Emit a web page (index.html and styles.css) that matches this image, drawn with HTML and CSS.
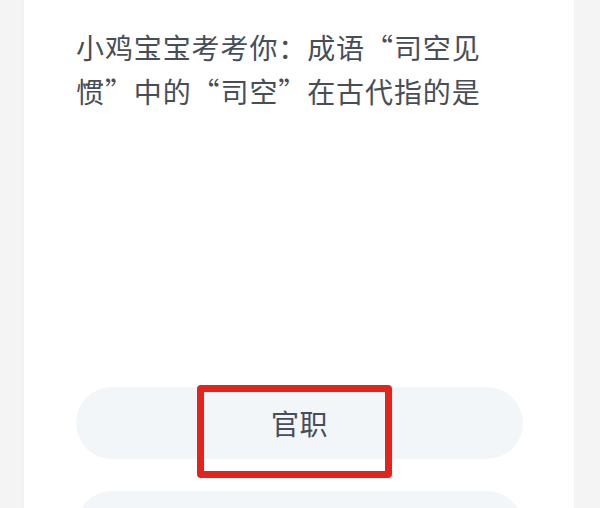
FILE: index.html
```html
<!DOCTYPE html>
<html lang="zh-CN">
<head>
<meta charset="utf-8">
<title>小鸡宝宝考考你</title>
<link rel="stylesheet" href="styles.css">
</head>
<body>
<div class="page">
  <div class="card">
    <p class="question">小鸡宝宝考考你：成语“司空见惯”中的“司空”在古代指的是</p>
    <div class="options">
      <div class="option">
        <span class="option-text">官职</span>
        <span class="highlight"></span>
      </div>
      <div class="option"></div>
    </div>
  </div>
</div>
</body>
</html>
```
FILE: styles.css
```css
html, body {
  margin: 0;
  padding: 0;
}
body {
  background: #f4f4f5;
  font-family: "Noto Sans CJK SC", "Noto Sans", sans-serif;
  color: #474e58;
  overflow: hidden;
}
.page {
  width: 600px;
  height: 508px;
  overflow: hidden;
}
.card {
  margin: 0 26px 0 24px;
  background: #ffffff;
  padding: 25px 51px 0 52px;
  height: 600px;
  box-shadow: 0 0 2px rgba(0, 0, 0, 0.03);
}
.question {
  margin: 0;
  width: 410px;
  font-size: 28px;
  line-height: 44px;
  letter-spacing: 0.9px;
}
.options {
  margin-top: 274px;
  display: flex;
  flex-direction: column;
  gap: 32px;
}
.option {
  position: relative;
  height: 72px;
  border-radius: 36px;
  background: #f3f6f9;
  display: flex;
  align-items: center;
  justify-content: center;
}
.option-text {
  font-size: 28px;
  line-height: 1;
  letter-spacing: 0.5px;
}
.highlight {
  position: absolute;
  left: 121px;
  top: -2px;
  width: 181px;
  height: 79px;
  border: 7px solid #e5231c;
  border-radius: 4px;
}
```
